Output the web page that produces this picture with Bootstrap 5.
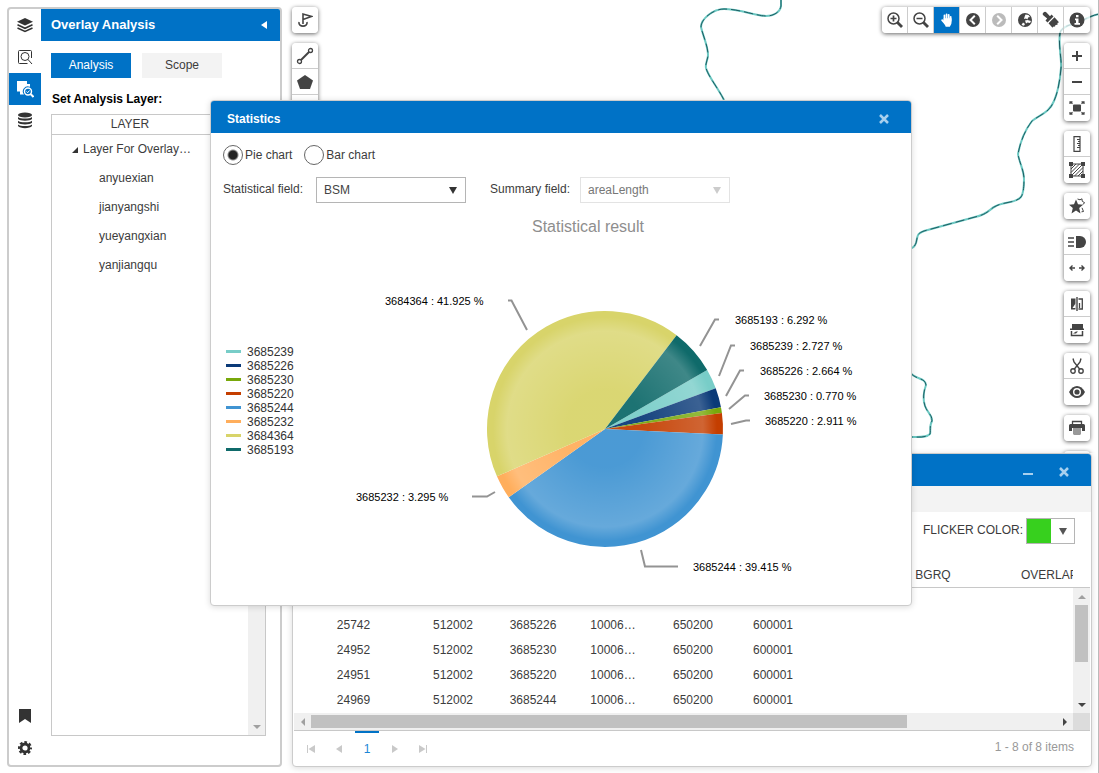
<!DOCTYPE html>
<html lang="en">
<head>
<meta charset="utf-8">
<meta name="viewport" content="width=device-width, initial-scale=1">
<title>Overlay Analysis</title>
<link rel="stylesheet" href="https://cdn.jsdelivr.net/npm/bootstrap@5.3.0/dist/css/bootstrap.min.css">
<style>
  :root { --brand: #0072c6; --line: #c8c8c8; --ink: #444; }
  body { font-family: "Liberation Sans", Arial, sans-serif; font-size: 12px; line-height: 18px; color: #3c3c3c; background: #fff; }
  button { font: inherit; color: inherit; background: none; border: 0; padding: 0; }
  svg { display: block; }
  .stage { border-right: 1px solid #bbb; }

  /* left panel */
  .side-panel { width: 275px; margin: 7px 0 6px 7px; border: 2px solid #ccc; border-radius: 4px; background: #fff; }
  .rail { width: 32px; padding-bottom: 1px; }
  .rail button { width: 32px; height: 32px; color: #333; }
  .rail button.active { background: var(--brand); color: #fff; }
  .panel-head { height: 32px; padding: 0 13px 0 10px; background: var(--brand); color: #fff; font-size: 13px; font-weight: bold; border-top-right-radius: 2px; }
  .panel-body { padding: 12px 14px 29px 10px; }
  .tab-btn { width: 80px; height: 25px; padding-bottom: 1px; background: #f3f3f3; }
  .tab-btn.active { background: var(--brand); color: #fff; }
  .tabs-row { gap: 11px; }
  .sub-head { font-size: 12px; line-height: 18px; font-weight: bold; color: #000; margin: 12px 0 6px 1px; }
  .tree-box { border: 1px solid var(--line); }
  .tree-head { border-bottom: 1px solid var(--line); line-height: 19px; }
  .tree-head span { width: 156px; }
  .tree-list li { line-height: 29px; }
  .tree-list .root-row { padding-left: 20px; gap: 5px; }
  .tree-list ul li { padding-left: 47px; }
  .bar-track { background: #f0f0f0; }
  .bar-v { width: 17px; }
  .bar-h { height: 17px; }
  .bar-corner { background: #dcdcdc; }
  .bar-thumb { background: #c1c1c1; }
  .arrow-cell { width: 17px; height: 17px; flex: none; }

  /* map */
  .map-area { min-height: 0; }
  .map-lines { width: 410px; height: 460px; }
  .river-base { fill: none; stroke: #6cc8c2; stroke-width: 2; }
  .river-dash { fill: none; stroke: #1d5c62; stroke-width: 1; stroke-dasharray: 9 4; }
  .map-tools { padding: 7px 8px 0 10px; }
  .tool-col { gap: 10px; }
  .tool-set { border-radius: 4px; background: rgba(255,255,255,.72); box-shadow: 0 1px 4px rgba(0,0,0,.6); overflow: hidden; }
  .tool-set button { width: 26px; height: 26px; color: var(--ink); flex: none; }
  .tool-set.flex-column button:not(:last-child) { border-bottom: 1px solid #ccc; }
  .tool-set.flex-row button:not(:last-child) { border-right: 1px solid #ccc; }
  .tool-set button.active { background: var(--brand); color: #fff; }
  .tool-set button:disabled { color: #bbb; }

  /* windows */
  .win { background: #fff; border: 1px solid #ccc; border-radius: 4px; box-shadow: 0 1px 6px rgba(0,0,0,.15); }
  .win-head { height: 32px; padding: 3px 16px 0; background: var(--brand); color: #fff; font-weight: bold; border-radius: 3px 3px 0 0; }
  .win-head button { color: #a8d0ee; width: 22px; height: 22px; }
  .result-win { margin: 0 6px 6px 10px; }
  .result-win .win-head { gap: 14px; }
  .strip { height: 26px; background: #f3f3f3; }
  .flick { padding: 6px 16px 0 0; gap: 3px; line-height: 24px; }
  .color-pick { width: 49px; height: 26px; border: 1px solid #b5b5b5; }
  .swatch { width: 24px; height: 24px; background: #37d01e; }
  .grid-wrap { padding: 0 1px; }
  .grid-clip { height: 169px; min-width: 0; }
  .data-grid { width: 973px; table-layout: fixed; border-collapse: separate; border-spacing: 0; }
  .data-grid th { font-weight: normal; text-align: center; height: 44px; padding: 18px 0 0; line-height: 18px; border-bottom: 1px solid var(--line); }
  .data-grid td { text-align: center; height: 25px; padding: 0 0 1px; }
  .data-grid th.wide-th { text-align: left; padding-left: 48px; }
  .grid-side { height: 44px; border-bottom: 1px solid var(--line); }
  .pager { height: 36px; border-top: 1px solid var(--line); padding: 0 16px 0 3px; margin: 0 1px; }
  .pager button, .pager .page-no { width: 28px; color: #c9c9c9; }
  .pager .page-no { width: 24px; margin: 0 2px; border-top: 2px solid var(--brand); color: #1c86d6; line-height: 32px; text-decoration: none; text-align: center; }
  .pager-info { color: #999; line-height: 32px; }

  /* statistics dialog */
  .stat-win { left: 210px; top: 100px; width: 702px; z-index: 5; }
  .stat-form { padding: 12px 12px 2px; }
  .form-line { gap: 12px; margin-bottom: 12px; }
  .radio-pick { width: 20px; height: 20px; margin: 0 2px 0 0; appearance: none; border: 1px solid #666; border-radius: 50%; background: #fff; }
  .radio-pick:checked { background: radial-gradient(circle, #222 0 4px, #fff 6px); }
  .field-label { width: 93px; line-height: 24px; }
  .second-label { width: 90px; }
  .pick { width: 150px; height: 26px; padding: 0 7px; margin-right: 24px; border: 1px solid #b5b5b5; border-radius: 0; color: #444; appearance: none;
    background: #fff url("data:image/svg+xml,%3Csvg xmlns='http://www.w3.org/2000/svg' width='8' height='7'%3E%3Cpath d='M0 0h8L4 7z' fill='%23333'/%3E%3C/svg%3E") no-repeat right 8px center; }
  .pick:disabled { border-color: #e3e3e3; color: #777; opacity: 1;
    background-image: url("data:image/svg+xml,%3Csvg xmlns='http://www.w3.org/2000/svg' width='8' height='7'%3E%3Cpath d='M0 0h8L4 7z' fill='%23ccc'/%3E%3C/svg%3E"); }
  .chart text { font-family: "Liberation Sans", Arial, sans-serif; }
  .chart .chart-title { font-size: 16px; fill: #8e8e8e; text-anchor: middle; }
  .chart .legend-text { font-size: 12px; fill: #333; }
  .chart .tag { font-size: 11px; fill: #000; }
  .chart .leader { fill: none; stroke: #939393; stroke-width: 2; }
  .chart .slices circle { fill: none; stroke-width: 118; }
</style>
</head>
<body>
<div class="stage d-flex vh-100 position-relative overflow-hidden">

  <aside class="side-panel d-flex flex-shrink-0">
    <nav class="rail d-flex flex-column" aria-label="Tools">
      <button class="d-flex align-items-center justify-content-center" aria-label="Layers"><svg width="18" height="18" viewBox="0 0 18 18"><path d="M9 2l8 3.700-8 3.700-8-3.700z" fill="currentColor"/><path d="M1.500 8.800L9 12.300l7.500-3.500M1.500 12L9 15.500l7.500-3.500" fill="none" stroke="currentColor" stroke-width="1.500"/></svg></button>
      <button class="d-flex align-items-center justify-content-center" aria-label="Search"><svg width="16" height="16" viewBox="0 0 16 16" fill="none" stroke="currentColor" stroke-width="1"><path d="M14.500 9V2.500a1 1 0 0 0-1-1h-11a1 1 0 0 0-1 1v11a1 1 0 0 0 1 1h8"/><circle cx="8" cy="7.500" r="4"/><path d="M11 10.500l4 4.500"/></svg></button>
      <button class="active d-flex align-items-center justify-content-center" aria-label="Overlay analysis"><svg width="18" height="18" viewBox="0 0 18 18"><path d="M1 1h10v3h3v2.800a5 5 0 0 0-6 7.700H4v-3H1z" fill="currentColor"/><circle cx="12" cy="11.500" r="3.500" fill="none" stroke="currentColor" stroke-width="1.400"/><path d="M10.500 11.500l1.200 1.200 1.800-2.200" fill="none" stroke="currentColor"/><path d="M14.500 14l3 3" stroke="currentColor" stroke-width="2"/></svg></button>
      <button class="d-flex align-items-center justify-content-center" aria-label="Data"><svg width="16" height="18" viewBox="0 0 16 18" fill="currentColor"><ellipse cx="8" cy="3" rx="7" ry="2.500"/><path d="M1 5c2 2 12 2 14 0v2c-2 2.300-12 2.300-14 0zM1 8.800c2 2 12 2 14 0v2c-2 2.300-12 2.300-14 0zM1 12.600c2 2 12 2 14 0v1.500c-2 2.800-12 2.800-14 0z"/></svg></button>
      <button class="d-flex align-items-center justify-content-center mt-auto" aria-label="Bookmarks"><svg width="12" height="14" viewBox="0 0 12 14"><path d="M0 0h12v14l-6-4-6 4z" fill="currentColor"/></svg></button>
      <button class="d-flex align-items-center justify-content-center" aria-label="Settings"><svg width="14" height="14" viewBox="0 0 14 14"><circle cx="7" cy="7" r="4" fill="none" stroke="currentColor" stroke-width="2.800"/><circle cx="7" cy="7" r="5.800" fill="none" stroke="currentColor" stroke-width="2.400" stroke-dasharray="2.600 1.955" stroke-dashoffset="1.300"/></svg></button>
    </nav>
    <div class="d-flex flex-column flex-grow-1">
      <div class="panel-head d-flex align-items-center justify-content-between">
        <span>Overlay Analysis</span>
        <button aria-label="Collapse"><svg width="6" height="8" viewBox="0 0 6 8"><path d="M6 0v8L0 4z" fill="#fff"/></svg></button>
      </div>
      <div class="panel-body d-flex flex-column flex-grow-1">
        <div class="tabs-row d-flex">
          <button class="tab-btn active">Analysis</button>
          <button class="tab-btn">Scope</button>
        </div>
        <h2 class="sub-head">Set Analysis Layer:</h2>
        <div class="tree-box d-flex flex-column flex-grow-1">
          <div class="tree-head d-flex text-center"><span>LAYER</span></div>
          <div class="d-flex flex-grow-1">
            <ul class="tree-list list-unstyled mb-0 flex-grow-1">
              <li>
                <div class="root-row d-flex align-items-center"><svg width="6" height="6" viewBox="0 0 6 6"><path d="M6 0v6H0z" fill="#333"/></svg>Layer For Overlay…</div>
                <ul class="list-unstyled">
                  <li>anyuexian</li>
                  <li>jianyangshi</li>
                  <li>yueyangxian</li>
                  <li>yanjiangqu</li>
                </ul>
              </li>
            </ul>
            <div class="bar-track bar-v d-flex flex-column justify-content-end">
              <span class="arrow-cell d-flex align-items-center justify-content-center"><svg width="8" height="4" viewBox="0 0 8 4"><path d="M0 0h8L4 4z" fill="#a0a0a0"/></svg></span>
            </div>
          </div>
        </div>
      </div>
    </div>
  </aside>

  <main class="d-flex flex-column flex-grow-1 overflow-hidden">
    <section class="map-area position-relative flex-grow-1 overflow-hidden" aria-label="Map">
      <svg class="map-lines position-absolute top-0 end-0" viewBox="689 0 410 460">
        <defs>
          <g id="rivers">
            <path d="M782 0V6C781 12 775 16 767 16C758 16 740 9 725 9C714 9 702 19 702 27C704 36 709 46 709 55C709 60 706 63 707 68C709 76 719 88 725 100"/>
            <path d="M1100 14C1090 16 1084 21 1074 24C1066 26 1062 29 1061 33C1059 45 1063 60 1062 68C1061 80 1059 92 1055 101C1050 113 1042 114 1033 121C1026 130 1021 143 1019 154C1020 162 1025 170 1025 179C1025 189 1024 194 1022 197C1017 203 1004 202 997 206C990 209 990 214 976 217L925 231C917 234 919 236 917 243C916 246 914 248 911 249"/>
            <path d="M911 372C916 380 926 377 927 385C924 393 924 400 926 406C929 414 933 414 933 421C930 426 932 431 931 434C927 438 920 437 911 437"/>
          </g>
        </defs>
        <use class="river-base" href="#rivers"/>
        <use class="river-dash" href="#rivers"/>
      </svg>
      <div class="map-tools d-flex justify-content-between position-relative">
        <div class="tool-col d-flex flex-column">
          <div class="tool-set d-flex flex-column">
            <button class="d-flex align-items-center justify-content-center" aria-label="Flag"><svg width="16" height="16" viewBox="0 0 16 16" fill="none" stroke="currentColor" stroke-width="1.600"><path d="M6 12V2l8.500 2.500L6 7.500"/><path d="M2 10c-1 5.500 9 5.500 8 0"/></svg></button>
          </div>
          <div class="tool-set d-flex flex-column">
            <button class="d-flex align-items-center justify-content-center" aria-label="Draw line"><svg width="18" height="18" viewBox="0 0 18 18" fill="none" stroke="currentColor"><circle cx="3.500" cy="14.500" r="2" stroke-width="1.300"/><circle cx="14.500" cy="3.500" r="2" stroke-width="1.300"/><path d="M5 13L13 5" stroke-width="2"/></svg></button>
            <button class="d-flex align-items-center justify-content-center" aria-label="Draw polygon"><svg width="16" height="14" viewBox="0 0 16 14"><path d="M8 0l8 5.500-3 8.500H3L0 5.500z" fill="currentColor"/></svg></button>
            <button aria-label="Draw rectangle"></button>
            <button aria-label="Draw circle"></button>
          </div>
        </div>
        <div class="tool-col d-flex flex-column align-items-end">
          <div class="tool-set d-flex flex-row">
            <button class="d-flex align-items-center justify-content-center" aria-label="Zoom in"><svg width="16" height="16" viewBox="0 0 16 16" fill="none" stroke="currentColor"><circle cx="6.500" cy="6.500" r="5.500" stroke-width="1.500"/><path d="M3.500 6.500h6M6.500 3.500v6" stroke-width="1.700"/><path d="M10.500 10.500l4.500 4.500" stroke-width="2.800"/></svg></button>
            <button class="d-flex align-items-center justify-content-center" aria-label="Zoom out"><svg width="16" height="16" viewBox="0 0 16 16" fill="none" stroke="currentColor"><circle cx="6.500" cy="6.500" r="5.500" stroke-width="1.500"/><path d="M3.500 6.500h6" stroke-width="1.700"/><path d="M10.500 10.500l4.500 4.500" stroke-width="2.800"/></svg></button>
            <button class="active d-flex align-items-center justify-content-center" aria-label="Pan"><svg width="12" height="14" viewBox="0 0 14 16"><path d="M4 8V2.500M6.500 7V1.300M9 7.500V2M11.300 9V4.200" fill="none" stroke="currentColor" stroke-width="2" stroke-linecap="round"/><path d="M3 6h9.300v4.500c0 2.500-1.300 3.500-2 5.500H5.500C5 13.500 2.500 11 .5 8.800c-.8-1 .7-2.100 1.700-1.200L3 8.500z" fill="currentColor"/></svg></button>
            <button class="d-flex align-items-center justify-content-center" aria-label="Previous view"><svg width="14" height="14" viewBox="0 0 14 14"><circle cx="7" cy="7" r="7" fill="currentColor"/><path d="M8.800 2.800L4.500 7l4.300 4.200" fill="none" stroke="#fff" stroke-width="2"/></svg></button>
            <button class="d-flex align-items-center justify-content-center" aria-label="Next view" disabled><svg width="14" height="14" viewBox="0 0 14 14"><circle cx="7" cy="7" r="7" fill="currentColor"/><path d="M5.200 2.800L9.500 7l-4.300 4.200" fill="none" stroke="#fff" stroke-width="2"/></svg></button>
            <button class="d-flex align-items-center justify-content-center" aria-label="Full extent"><svg width="14" height="14" viewBox="0 0 14 14"><circle cx="7" cy="7" r="7" fill="currentColor"/><path d="M7.500 1.500l3 .5 1.500 2-2 .5-.5 2-1.500-1-2 .5.500-2zM7 7.500l2.500-.5 3.500 1-1 2-2.500-.5-1.500 1zM5 9.500l2 1.500-1 1.800-2.500-.8z" fill="#fff"/></svg></button>
            <button class="d-flex align-items-center justify-content-center" aria-label="Clear"><svg width="18" height="18" viewBox="0 0 18 18" fill="currentColor"><path d="M1.500 1.500a2 2 0 0 1 3 0L8 5.200 9.500 3.500l2 2-6 6-2-2 1.700-2L1.500 4.500a2 2 0 0 1 0-3zM6.500 12.200l6-6 4.500 5-1.500.8v1.800l-2 .2-.5 1.500-2 .2-.5 1z"/></svg></button>
            <button class="d-flex align-items-center justify-content-center" aria-label="Identify"><svg width="16" height="16" viewBox="0 0 16 16"><circle cx="8" cy="8" r="7.500" fill="currentColor"/><path d="M6 6.500h3.500v4.500h1.500v1.800H5.500V11H7V8.300H6zM7 3h2.500v2.300H7z" fill="#fff"/></svg></button>
          </div>
          <div class="tool-set d-flex flex-column">
            <button class="d-flex align-items-center justify-content-center" aria-label="Zoom in one step"><svg width="10" height="10" viewBox="0 0 10 10"><path d="M0 5h10M5 0v10" stroke="currentColor" stroke-width="2"/></svg></button>
            <button class="d-flex align-items-center justify-content-center" aria-label="Zoom out one step"><svg width="10" height="10" viewBox="0 0 10 10"><path d="M0 5h10" stroke="currentColor" stroke-width="2"/></svg></button>
            <button class="d-flex align-items-center justify-content-center" aria-label="Fit"><svg width="16" height="14" viewBox="0 0 16 14"><rect x="4" y="3.500" width="8" height="7" rx="1" fill="currentColor"/><path d="M1 3V.8h2.500M12.500 .8h2.500V3M15 11v2.200h-2.500M3.500 13.200H1V11M1 .8l2.500 2M15 .8l-2.500 2M1 13.200l2.500-2M15 13.200l-2.500-2" fill="none" stroke="currentColor" stroke-width="1.200"/></svg></button>
          </div>
          <div class="tool-set d-flex flex-column">
            <button class="d-flex align-items-center justify-content-center" aria-label="Measure distance"><svg width="8" height="16" viewBox="0 0 8 16" fill="none" stroke="currentColor"><path d="M1 .7h6v14.600H1z" stroke-width="1.200"/><path d="M7 3.500H4M7 5.500H5M7 7.500H4M7 9.500H5M7 11.500H4" stroke-width="1"/></svg></button>
            <button class="d-flex align-items-center justify-content-center" aria-label="Measure area"><svg width="16" height="16" viewBox="0 0 16 16"><path d="M2 2h12v12H2zM2 7l5-5M2 10.500L10.500 2M2 14L14 2M5.500 14L14 5.500M9 14l5-5" fill="none" stroke="currentColor" stroke-width="1"/><path d="M0 0h4v4H0zM12 0h4v4h-4zM0 12h4v4H0zM12 12h4v4h-4z" fill="currentColor"/></svg></button>
          </div>
          <div class="tool-set d-flex flex-column">
            <button class="d-flex align-items-center justify-content-center" aria-label="Favourites"><svg width="18" height="16" viewBox="0 0 18 16"><path d="M8 1.500l2 4.700 5 .5-3.800 3.300 1.300 5.500L8 12.500l-4.500 3 1.300-5.500L1 6.700l5-.5z" fill="currentColor"/><path d="M9.500 1l2.500.8 2-1 .2 2.400 2.500 1.600-2 1.700M14 9.800l1.500 3.700-2 .3" fill="none" stroke="currentColor" stroke-width="1"/></svg></button>
          </div>
          <div class="tool-set d-flex flex-column">
            <button class="d-flex align-items-center justify-content-center" aria-label="Layer beam"><svg width="18" height="12" viewBox="0 0 18 12"><path d="M0 2h6M0 6h6M0 10h6" stroke="currentColor" stroke-width="1.600"/><path d="M8 0h4a6 6 0 0 1 0 12H8z" fill="currentColor"/></svg></button>
            <button class="d-flex align-items-center justify-content-center" aria-label="Swipe"><svg width="16" height="6" viewBox="0 0 16 6"><path d="M6 3H1M3.500.5L1 3l2.500 2.500M10 3H15M12.500.5L15 3l-2.500 2.500" fill="none" stroke="currentColor" stroke-width="1.400"/></svg></button>
          </div>
          <div class="tool-set d-flex flex-column">
            <button class="d-flex align-items-center justify-content-center" aria-label="Compare side by side"><svg width="14" height="14" viewBox="0 0 14 14"><path d="M5.500 1.500v11H1v-11z" fill="currentColor"/><path d="M2.500 11l3-4.500V11z" fill="#fff"/><path d="M7 0v14" stroke="currentColor" stroke-width="1.400"/><path d="M8.500 2h3.800v10H8.500M9.500 11V6" fill="none" stroke="currentColor" stroke-width="1.300"/></svg></button>
            <button class="d-flex align-items-center justify-content-center" aria-label="Compare stacked"><svg width="14" height="14" viewBox="0 0 14 14"><path d="M2 1h11v5H2z" fill="currentColor"/><path d="M0 6.300h14" stroke="currentColor" stroke-width="1.600"/><path d="M1.500 8v4.500h11V8" fill="none" stroke="currentColor" stroke-width="1.500"/><path d="M3 10.500l3-2h2l-2 2z" fill="currentColor"/></svg></button>
          </div>
          <div class="tool-set d-flex flex-column">
            <button class="d-flex align-items-center justify-content-center" aria-label="Clip"><svg width="14" height="16" viewBox="0 0 14 16" fill="none" stroke="currentColor" stroke-width="1.400"><circle cx="3" cy="13" r="2.200"/><circle cx="11" cy="13" r="2.200"/><path d="M3 .5l1 3.500 5.800 7.200M11 .5L10 4l-5.800 7.200"/></svg></button>
            <button class="d-flex align-items-center justify-content-center" aria-label="Visibility"><svg width="16" height="12" viewBox="0 0 16 12"><path d="M0 6c4-8 12-8 16 0-4 8-12 8-16 0z" fill="currentColor"/><circle cx="8" cy="6" r="3.300" fill="none" stroke="#fff" stroke-width="1.400"/></svg></button>
          </div>
          <div class="tool-set d-flex flex-column">
            <button class="d-flex align-items-center justify-content-center" aria-label="Print"><svg width="16" height="16" viewBox="0 0 16 16"><path d="M3.500 4V1.500h9V4" fill="none" stroke="currentColor" stroke-width="1.300"/><path d="M1.500 4h13A1.500 1.500 0 0 1 16 5.500V11h-3V8H3v3H0V5.500A1.500 1.500 0 0 1 1.500 4z" fill="currentColor"/><path d="M4 8h8v6l-1 1H5l-1-1z" fill="#999"/></svg></button>
          </div>
          <div class="tool-set d-flex flex-column"><button aria-label="More tools"></button></div>
        </div>
      </div>
    </section>

    <section class="win result-win flex-shrink-0 position-relative" aria-label="Analysis results">
      <div class="win-head d-flex align-items-center justify-content-end">
        <button class="d-flex align-items-center justify-content-center" aria-label="Minimize"><svg width="10" height="10" viewBox="0 0 10 10"><path d="M0 7h10" stroke="currentColor" stroke-width="2"/></svg></button>
        <button class="d-flex align-items-center justify-content-center" aria-label="Close results"><svg width="10" height="10" viewBox="0 0 10 10"><path d="M1 1l8 8M9 1L1 9" stroke="currentColor" stroke-width="2.500"/></svg></button>
      </div>
      <div class="strip"></div>
      <div class="flick d-flex justify-content-end">
        <label for="flickerColor">FLICKER COLOR:</label>
        <button id="flickerColor" class="color-pick d-flex align-items-center"><span class="swatch"></span><span class="flex-grow-1 d-flex justify-content-center"><svg width="8" height="7" viewBox="0 0 8 7"><path d="M0 0h8L4 7z" fill="#555"/></svg></span></button>
      </div>
      <div class="grid-wrap">
        <div class="d-flex">
          <div class="grid-clip flex-grow-1 overflow-hidden">
            <table class="data-grid">
              <colgroup><col width="119"><col width="80"><col width="80"><col width="80"><col width="80"><col width="80"><col width="80"><col width="80"><col></colgroup>
              <thead><tr><th></th><th></th><th></th><th></th><th></th><th></th><th></th><th>BGRQ</th><th class="wide-th">OVERLAP</th></tr></thead>
              <tbody>
                <tr><td colspan="9"></td></tr>
                <tr><td>25742</td><td>512002</td><td>3685226</td><td>10006…</td><td>650200</td><td>600001</td><td></td><td></td><td></td></tr>
                <tr><td>24952</td><td>512002</td><td>3685230</td><td>10006…</td><td>650200</td><td>600001</td><td></td><td></td><td></td></tr>
                <tr><td>24951</td><td>512002</td><td>3685220</td><td>10006…</td><td>650200</td><td>600001</td><td></td><td></td><td></td></tr>
                <tr><td>24969</td><td>512002</td><td>3685244</td><td>10006…</td><td>650200</td><td>600001</td><td></td><td></td><td></td></tr>
              </tbody>
            </table>
          </div>
          <div class="bar-v flex-shrink-0 d-flex flex-column">
            <div class="grid-side"></div>
            <div class="bar-track flex-grow-1 d-flex flex-column align-items-center">
              <span class="arrow-cell d-flex align-items-center justify-content-center"><svg width="8" height="4" viewBox="0 0 8 4"><path d="M0 4h8L4 0z" fill="#a0a0a0"/></svg></span>
              <span class="bar-thumb" style="width:13px;height:57px"></span>
              <span class="arrow-cell d-flex align-items-center justify-content-center mt-auto"><svg width="8" height="4" viewBox="0 0 8 4"><path d="M0 0h8L4 4z" fill="#444"/></svg></span>
            </div>
          </div>
        </div>
        <div class="d-flex">
          <div class="bar-track bar-h flex-grow-1 d-flex align-items-center">
            <span class="arrow-cell d-flex align-items-center justify-content-center"><svg width="4" height="8" viewBox="0 0 4 8"><path d="M4 0v8L0 4z" fill="#a0a0a0"/></svg></span>
            <div class="flex-grow-1"><div class="bar-thumb" style="width:80%;height:13px"></div></div>
            <span class="arrow-cell d-flex align-items-center justify-content-center"><svg width="4" height="8" viewBox="0 0 4 8"><path d="M0 0v8l4-4z" fill="#444"/></svg></span>
          </div>
          <div class="bar-v bar-corner"></div>
        </div>
      </div>
      <div class="pager d-flex align-items-stretch">
        <button class="d-flex align-items-center justify-content-center" aria-label="First page"><svg width="8" height="8" viewBox="0 0 8 8"><path d="M0 0h1v8H0zM8 0v8L1.500 4z" fill="currentColor"/></svg></button>
        <button class="d-flex align-items-center justify-content-center" aria-label="Previous page"><svg width="6" height="8" viewBox="0 0 6 8"><path d="M6 0v8L0 4z" fill="currentColor"/></svg></button>
        <a class="page-no" href="#">1</a>
        <button class="d-flex align-items-center justify-content-center" aria-label="Next page"><svg width="6" height="8" viewBox="0 0 6 8"><path d="M0 0v8l6-4z" fill="currentColor"/></svg></button>
        <button class="d-flex align-items-center justify-content-center" aria-label="Last page"><svg width="8" height="8" viewBox="0 0 8 8"><path d="M7 0h1v8H7zM0 0v8l6.500-4z" fill="currentColor"/></svg></button>
        <span class="pager-info ms-auto">1 - 8 of 8 items</span>
      </div>
    </section>
  </main>

  <section class="win stat-win position-absolute" role="dialog" aria-label="Statistics">
    <div class="win-head d-flex align-items-center justify-content-between">
      <span>Statistics</span>
      <button class="d-flex align-items-center justify-content-center" aria-label="Close statistics"><svg width="10" height="10" viewBox="0 0 10 10"><path d="M1 1l8 8M9 1L1 9" stroke="currentColor" stroke-width="2.500"/></svg></button>
    </div>
    <form class="stat-form">
      <div class="form-line d-flex">
        <div class="d-flex align-items-center"><input class="radio-pick" type="radio" name="kind" id="pie" checked><label for="pie">Pie chart</label></div>
        <div class="d-flex align-items-center"><input class="radio-pick" type="radio" name="kind" id="bar"><label for="bar">Bar chart</label></div>
      </div>
      <div class="d-flex">
        <label class="field-label" for="statField">Statistical field:</label>
        <select class="pick" id="statField"><option>BSM</option></select>
        <label class="field-label second-label" for="sumField">Summary field:</label>
        <select class="pick" id="sumField" disabled><option>areaLength</option></select>
      </div>
    </form>
    <svg class="chart w-100" viewBox="0 0 700 400" role="img" aria-label="Statistical result">
      <defs>
        <radialGradient id="bevel">
          <stop offset=".33" stop-color="#fff" stop-opacity=".06"/>
          <stop offset=".83" stop-color="#fff" stop-opacity=".2"/>
          <stop offset=".95" stop-color="#fff" stop-opacity="0"/>
        </radialGradient>
      </defs>
      <text class="chart-title" x="377" y="27">Statistical result</text>
      <g>
        <path stroke="#78cdc8" stroke-width="3" d="M15 146.500h15"/><text class="legend-text" x="36" y="151">3685239</text>
        <path stroke="#0a3a78" stroke-width="3" d="M15 160.500h15"/><text class="legend-text" x="36" y="165">3685226</text>
        <path stroke="#78a80b" stroke-width="3" d="M15 174.500h15"/><text class="legend-text" x="36" y="179">3685230</text>
        <path stroke="#c43e00" stroke-width="3" d="M15 188.500h15"/><text class="legend-text" x="36" y="193">3685220</text>
        <path stroke="#4094d2" stroke-width="3" d="M15 202.500h15"/><text class="legend-text" x="36" y="207">3685244</text>
        <path stroke="#ffae5c" stroke-width="3" d="M15 216.500h15"/><text class="legend-text" x="36" y="221">3685232</text>
        <path stroke="#d8d46a" stroke-width="3" d="M15 230.500h15"/><text class="legend-text" x="36" y="235">3684364</text>
        <path stroke="#0f6a6a" stroke-width="3" d="M15 244.500h15"/><text class="legend-text" x="36" y="249">3685193</text>
      </g>
      <!-- each slice is a dash of a 100-unit ring, offset by the shares before it -->
      <g class="slices" transform="rotate(-30 394 224)">
        <circle cx="394" cy="224" r="59" pathLength="100" stroke="#78cdc8" stroke-dasharray="2.727 97.273"/>
        <circle cx="394" cy="224" r="59" pathLength="100" stroke="#0a3a78" stroke-dasharray="2.664 97.336" stroke-dashoffset="-2.727"/>
        <circle cx="394" cy="224" r="59" pathLength="100" stroke="#78a80b" stroke-dasharray=".770 99.230" stroke-dashoffset="-5.391"/>
        <circle cx="394" cy="224" r="59" pathLength="100" stroke="#c43e00" stroke-dasharray="2.911 97.089" stroke-dashoffset="-6.161"/>
        <circle cx="394" cy="224" r="59" pathLength="100" stroke="#4094d2" stroke-dasharray="39.415 60.585" stroke-dashoffset="-9.072"/>
        <circle cx="394" cy="224" r="59" pathLength="100" stroke="#ffae5c" stroke-dasharray="3.295 96.705" stroke-dashoffset="-48.487"/>
        <circle cx="394" cy="224" r="59" pathLength="100" stroke="#d8d46a" stroke-dasharray="41.925 58.075" stroke-dashoffset="-51.782"/>
        <circle cx="394" cy="224" r="59" pathLength="100" stroke="#0f6a6a" stroke-dasharray="6.293 93.707" stroke-dashoffset="-93.707"/>
      </g>
      <circle cx="394" cy="224" r="118" fill="url(#bevel)"/>
      <g class="leader">
        <path d="M297 95.500h3.500L316 125"/>
        <path d="M508 114.500h-4L489 141"/>
        <path d="M524 140.500h-4L508 171"/>
        <path d="M533 165.500h-4L515 191"/>
        <path d="M538 190.500h-4L518 204"/>
        <path d="M539 215.500h-4L520 219"/>
        <path d="M467 361.500h-33L430 345"/>
        <path d="M261 291.500h15L284 287"/>
      </g>
      <g class="tag">
        <text x="174" y="100">3684364 : 41.925 %</text>
        <text x="524" y="119">3685193 : 6.292 %</text>
        <text x="539" y="145">3685239 : 2.727 %</text>
        <text x="549" y="170">3685226 : 2.664 %</text>
        <text x="553" y="195">3685230 : 0.770 %</text>
        <text x="554" y="220">3685220 : 2.911 %</text>
        <text x="482" y="366">3685244 : 39.415 %</text>
        <text x="145" y="296">3685232 : 3.295 %</text>
      </g>
    </svg>
  </section>
</div>
<script src="https://cdn.jsdelivr.net/npm/bootstrap@5.3.0/dist/js/bootstrap.bundle.min.js"></script>
</body>
</html>
